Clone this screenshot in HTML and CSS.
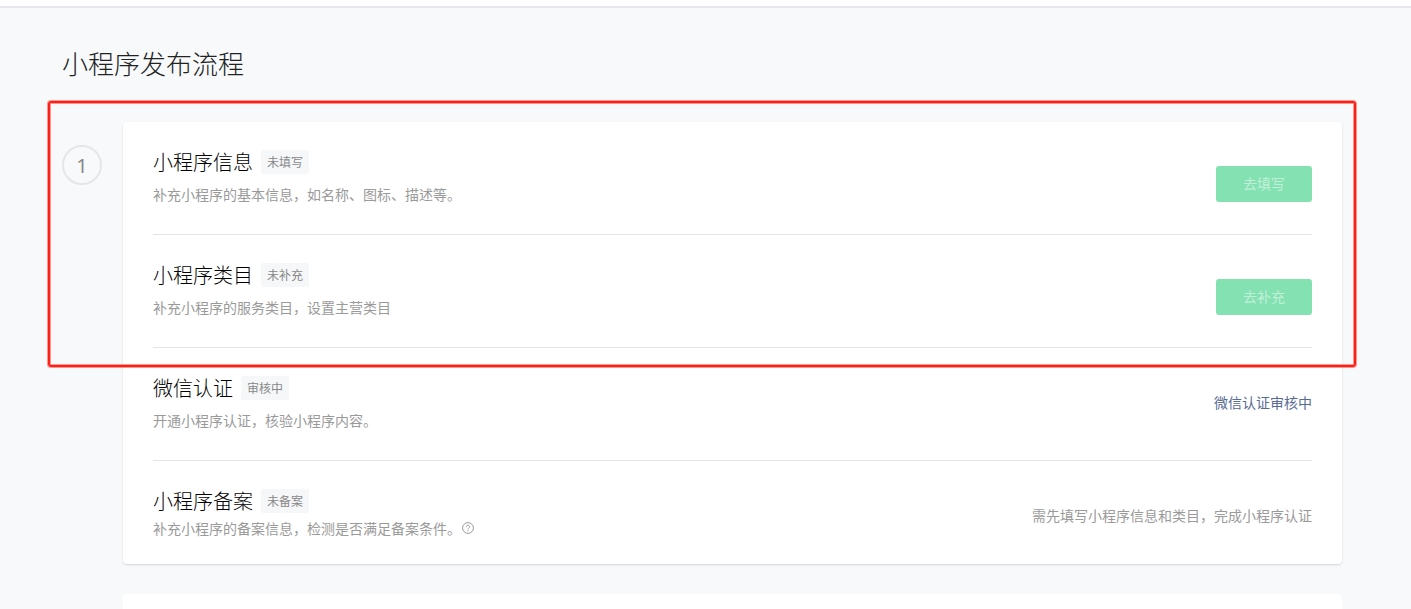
FILE: index.html
```html
<!DOCTYPE html>
<html lang="zh-CN">
<head>
    <meta charset="UTF-8">
    <meta name="viewport" content="width=device-width, initial-scale=1.0">
    <title>小程序发布流程</title>
    <link rel="stylesheet" href="styles.css">
</head>
<body>
    <header class="topbar"></header>
    <main class="main">
        <h1 class="title">小程序发布流程</h1>
        <div class="steps">
            <section class="step">
                <div class="step-num">1</div>
                <div class="card">
                    <div class="item">
                        <div class="info">
                            <div class="info-head">
                                <h2 class="name">小程序信息</h2>
                                <span class="tag">未填写</span>
                            </div>
                            <p class="desc">补充小程序的基本信息，如名称、图标、描述等。</p>
                        </div>
                        <div class="action"><button class="btn" type="button" disabled>去填写</button></div>
                    </div>
                    <div class="item">
                        <div class="info">
                            <div class="info-head">
                                <h2 class="name">小程序类目</h2>
                                <span class="tag">未补充</span>
                            </div>
                            <p class="desc">补充小程序的服务类目，设置主营类目</p>
                        </div>
                        <div class="action"><button class="btn" type="button" disabled>去补充</button></div>
                    </div>
                    <div class="item">
                        <div class="info">
                            <div class="info-head">
                                <h2 class="name">微信认证</h2>
                                <span class="tag">审核中</span>
                            </div>
                            <p class="desc">开通小程序认证，核验小程序内容。</p>
                        </div>
                        <div class="action"><a class="link" href="#">微信认证审核中</a></div>
                    </div>
                    <div class="item item-last">
                        <div class="info">
                            <div class="info-head">
                                <h2 class="name">小程序备案</h2>
                                <span class="tag">未备案</span>
                            </div>
                            <p class="desc">
                                补充小程序的备案信息，检测是否满足备案条件。
                                <svg class="help" viewBox="0 0 12 12" width="12" height="12" fill="none" stroke="currentColor">
                                    <circle cx="6" cy="6" r="5.4" stroke-width="1"/>
                                    <path d="M4.4 4.8a1.6 1.6 0 1 1 2.5 1.3c-.6.4-.9.6-.9 1.2" stroke-width="1"/>
                                    <circle cx="6" cy="8.7" r="0.6" fill="currentColor" stroke="none"/>
                                </svg>
                            </p>
                        </div>
                        <div class="action">需先填写小程序信息和类目，完成小程序认证</div>
                    </div>
                </div>
            </section>
            <section class="step step-next">
                <div class="card"></div>
            </section>
            <div class="highlight"></div>
        </div>
    </main>
</body>
</html>
```
FILE: styles.css
```css
*{
    box-sizing: border-box;
}
body{
    display: flex;
    flex-direction: column;
    min-height: 100vh;
    margin: 0;
    background-color: #f7f9fb;
    color: #9a9a9a;
    font-family: "Noto Sans CJK SC", sans-serif;
    font-size: 14px;
    line-height: 20px;
}
h1, h2, p{
    margin: 0;
}
.topbar{
    height: 8px;
    background-color: #fff;
    border-bottom: 2px solid #e4e8eb;
}
.main{
    flex: 1;
    display: flex;
    flex-direction: column;
    padding: 35px 69px 0 62px;
}
.title{
    color: #222;
    font-size: 26px;
    font-weight: 300;
    line-height: 40px;
}
.steps{
    position: relative;
    flex: 1;
    display: flex;
    flex-direction: column;
    gap: 30px;
    margin-top: 39px;
}
.step{
    display: flex;
    align-items: flex-start;
    gap: 21px;
}
.step-num{
    flex: none;
    width: 40px;
    height: 40px;
    margin-top: 23px;
    border: 2px solid #e4e6e8;
    border-radius: 50%;
    color: #888;
    font-family: "Noto Sans", sans-serif;
    font-size: 20px;
    line-height: 38px;
    text-align: center;
}
.card{
    flex: 1;
    padding: 0 30px;
    background-color: #fff;
    border-radius: 4px;
    box-shadow: 0 1px 2px rgba(0, 0, 0, 0.15);
}
/* next step, goes on to the bottom of the page */
.step-next{
    flex: 1;
    align-items: stretch;
    padding-left: 61px;
}
.step-next .card{
    border-radius: 4px 4px 0 0;
    box-shadow: none;
}
.item{
    display: flex;
    justify-content: space-between;
    padding: 28px 0 30px;
    border-bottom: 1px solid #e4e4e4;
}
.item-last{
    padding-bottom: 26px;
    border-bottom: none;
}
.info-head{
    display: flex;
    align-items: center;
    gap: 8px;
}
.name{
    color: #000;
    font-size: 20px;
    font-weight: 300;
    line-height: 24px;
}
.tag{
    padding: 0 6px;
    background-color: #f5f7f9;
    border-radius: 2px;
    color: #888;
    font-size: 12px;
    line-height: 24px;
}
.desc{
    display: flex;
    align-items: center;
    margin-top: 10px;
}
.item-last .desc{
    margin-top: 5px;
}
.help{
    margin-left: 1px;
}
.action{
    margin-top: 16px;
}
.btn{
    display: block;
    width: 96px;
    height: 36px;
    padding: 0 0 2px;
    border: none;
    border-radius: 3px;
    background-color: #84e1b2;
    color: #c1f0d8;
    font-family: inherit;
    font-size: 14px;
}
.link{
    color: #576b95;
    text-decoration: none;
}
/* red frame round the first two items */
.highlight{
    position: absolute;
    top: -21px;
    left: -14px;
    right: -14px;
    height: 266px;
    border: 2px solid #fd2015;
    border-radius: 3px;
    box-shadow: 0 0 0 1px rgba(253, 32, 21, 0.45), inset 0 0 0 1px rgba(253, 32, 21, 0.45);
    pointer-events: none;
}
```
